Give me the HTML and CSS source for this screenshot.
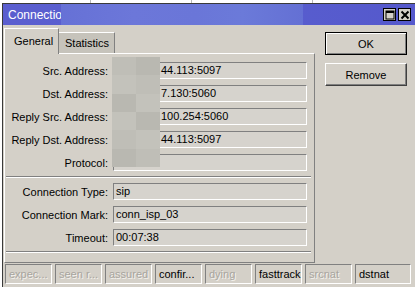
FILE: index.html
```html
<!DOCTYPE html>
<html>
<head>
<meta charset="utf-8">
<link rel="stylesheet" href="styles.css">
</head>
<body>
<div class="topstrip"><span class="vl v1"></span><span class="vl v2"></span><span class="vl v3"></span></div>
<div class="window">
  <div class="titlebar">
    <span class="title">Connection</span>
    <div class="blurband"></div>
    <div class="tbtns">
      <span class="tbtn"><svg width="10" height="10" viewBox="0 0 10 10"><rect x="1" y="1" width="8" height="8" fill="none" stroke="#000" stroke-width="1"/><rect x="1" y="1" width="8" height="2" fill="#000"/></svg></span>
      <span class="tbtn"><svg width="10" height="10" viewBox="0 0 10 10"><path d="M1.5 1.5 L8.5 8.5 M8.5 1.5 L1.5 8.5" stroke="#000" stroke-width="2"/></svg></span>
    </div>
  </div>
  <div class="client">
    <div class="main">
      <div class="leftcol">
        <div class="tabs">
          <div class="tab active">General</div>
          <div class="tab">Statistics</div>
        </div>
        <div class="panel">
          <div class="row"><span class="label">Src. Address:</span><span class="field masked">44.113:5097</span></div>
          <div class="row"><span class="label">Dst. Address:</span><span class="field masked">7.130:5060</span></div>
          <div class="row"><span class="label">Reply Src. Address:</span><span class="field masked">100.254:5060</span></div>
          <div class="row"><span class="label">Reply Dst. Address:</span><span class="field masked">44.113:5097</span></div>
          <div class="row"><span class="label">Protocol:</span><span class="field masked"></span></div>
          <div class="sep"></div>
          <div class="row"><span class="label">Connection Type:</span><span class="field">sip</span></div>
          <div class="row"><span class="label">Connection Mark:</span><span class="field">conn_isp_03</span></div>
          <div class="row"><span class="label">Timeout:</span><span class="field">00:07:38</span></div>
          <div class="sep last"></div>
        </div>
      </div>
      <div class="rightcol">
        <div class="btn default">OK</div>
        <div class="btn">Remove</div>
      </div>
    </div>
    <div class="status">
      <span class="cell off">expec...</span>
      <span class="cell off">seen r...</span>
      <span class="cell off">assured</span>
      <span class="cell">confir...</span>
      <span class="cell off">dying</span>
      <span class="cell">fasttrack</span>
      <span class="cell off">srcnat</span>
      <span class="cell wide">dstnat</span>
    </div>
  </div>
  <div class="mosaic">
    <span class="m1"></span><span class="m2"></span>
    <span class="m3"></span><span class="m1"></span>
    <span class="m2"></span><span class="m3"></span>
    <span class="m3"></span><span class="m2"></span>
    <span class="m1"></span><span class="m3"></span>
    <span class="m2"></span><span class="m1"></span>
  </div>
</div>
</body>
</html>
```
FILE: styles.css
```css
* { box-sizing: border-box; }
html, body { margin: 0; padding: 0; }
body {
  width: 416px;
  height: 287px;
  overflow: hidden;
  background: #ffffff;
  font-family: "Liberation Sans", Arial, sans-serif;
  font-size: 11px;
  color: #000;
}
.topstrip {
  height: 3px;
  display: flex;
}
.vl {
  width: 1px;
  height: 3px;
  background: #b8b8b8;
}
.v1 { margin-left: 90px; }
.v2 { margin-left: 100px; }
.v3 { margin-left: 120px; }
.window {
  position: relative;
  margin-left: 2px;
  width: 413px;
  height: 284px;
  border-left: 1px solid #3a3a3a;
  border-top: 1px solid #3a3a3a;
  background: #d4d0c8;
}
.titlebar {
  position: relative;
  height: 21px;
  background: linear-gradient(90deg, #5a5ecf 0%, #5a60d0 40%, #5559cc 100%);
  color: #fff;
  display: flex;
  align-items: center;
}
.title {
  padding-left: 5px;
  font-family: "Liberation Sans", Arial, sans-serif;
  font-size: 12px;
  position: relative;
  z-index: 1;
}
.blurband {
  position: absolute;
  left: 58px;
  top: 0;
  width: 242px;
  height: 21px;
  z-index: 2;
  background: linear-gradient(90deg, #6671d6 0%, #6c77d9 30%, #6a76d8 55%, #6b7ad9 75%, #6470d4 100%);
}
.tbtns {
  margin-left: auto;
  display: flex;
  gap: 2px;
  padding-right: 4px;
}
.tbtn {
  width: 13px;
  height: 13px;
  background: #d4d0c8;
  border: 1px solid #000;
  display: flex;
  align-items: center;
  justify-content: center;
}
.client { padding: 3px 0 0 1px; }
.main { display: flex; }
.leftcol { width: 311px; }
.tabs {
  display: flex;
  align-items: flex-end;
  height: 25px;
}
.tab {
  height: 21px;
  padding: 0 6px;
  display: flex;
  align-items: center;
  background: #c6c3bb;
  border-top: 1px solid #fff;
  border-right: 1px solid #808080;
  font-size: 11px;
  width: 56px;
}
.tab.active {
  height: 26px;
  width: 55px;
  padding-left: 9px;
  margin-bottom: -1px;
  background: #d4d0c8;
  border-left: 1px solid #fff;
  position: relative;
  z-index: 1;
  padding-bottom: 2px;
}
.panel {
  height: 210px;
  border-top: 1px solid #fff;
  border-left: 1px solid #fff;
  border-right: 1px solid #808080;
  border-bottom: 1px solid #808080;
  padding: 8px 7px 0 0;
  display: flex;
  flex-direction: column;
  gap: 6px;
}
.row {
  display: flex;
  align-items: center;
  height: 17px;
}
.label {
  width: 103px;
  text-align: right;
  margin-right: 5px;
  white-space: nowrap;
}
.field {
  width: 194px;
  height: 17px;
  border-top: 1px solid #808080;
  border-left: 1px solid #808080;
  border-right: 1px solid #fff;
  border-bottom: 1px solid #fff;
  background: #d6d3cd;
  padding-left: 2px;
  line-height: 15px;
  white-space: nowrap;
  overflow: hidden;
}
.field.masked { padding-left: 47px; }
.sep {
  height: 2px;
  margin: -1px 0 -1px 1px;
  width: 305px;
  border-top: 1px solid #808080;
  border-bottom: 1px solid #fff;
}
.rightcol {
  margin-left: 10px;
  padding-top: 4px;
  display: flex;
  flex-direction: column;
  gap: 8px;
}
.btn {
  width: 82px;
  height: 23px;
  display: flex;
  align-items: center;
  justify-content: center;
  border-top: 1px solid #fff;
  border-left: 1px solid #fff;
  border-right: 1px solid #404040;
  border-bottom: 1px solid #404040;
  box-shadow: inset -1px -1px 0 #808080;
  font-size: 11px;
}
.btn.default {
  border: 1px solid #000;
  box-shadow: inset 1px 1px 0 #fff, inset -1px -1px 0 #808080;
}
.status {
  margin-top: 1px;
  padding-left: 1px;
  display: flex;
  gap: 3px;
}
.cell {
  width: 47px;
  height: 20px;
  border-top: 1px solid #808080;
  border-left: 1px solid #808080;
  border-right: 1px solid #fff;
  border-bottom: 1px solid #fff;
  padding-left: 3px;
  line-height: 18px;
  font-size: 11px;
  white-space: nowrap;
  overflow: hidden;
}
.cell.off {
  color: #a8a59e;
  text-shadow: 1px 1px 0 #f4f2ee;
}
.cell.wide { width: 56px; }
.mosaic {
  position: absolute;
  left: 109px;
  top: 53px;
  width: 48px;
  height: 110px;
  display: grid;
  grid-template-columns: 24px 24px;
  grid-template-rows: repeat(6, 1fr);
  z-index: 3;
}
.m1 { background: #bfbeb7; }
.m2 { background: #b9b8b1; }
.m3 { background: #c3c2bb; }
```
